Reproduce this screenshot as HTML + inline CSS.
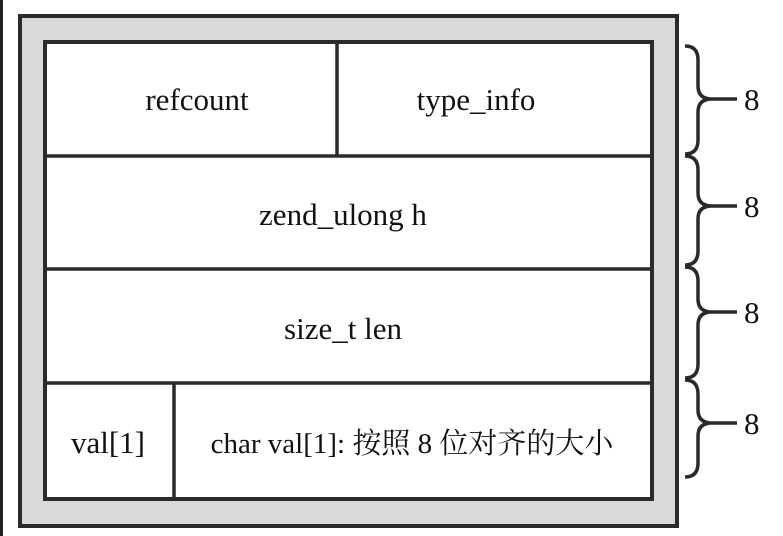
<!DOCTYPE html>
<html><head><meta charset="utf-8"><style>
html,body{margin:0;padding:0;background:#fff;width:783px;height:536px;overflow:hidden}
svg{display:block}
.t{font-family:'Liberation Serif','Noto Serif CJK SC',serif;fill:#111}
</style></head><body>
<svg width="783" height="536" viewBox="0 0 783 536">
<rect x="0" y="0" width="3" height="536" fill="#222"/>
<rect x="20" y="16" width="657" height="510" fill="#d9d9d9" stroke="#2a2a2a" stroke-width="4"/>
<rect x="45" y="42" width="607" height="457" fill="#fff" stroke="#2a2a2a" stroke-width="4"/>
<g stroke="#2a2a2a" stroke-width="3.5">
<line x1="45" y1="156" x2="652" y2="156"/>
<line x1="45" y1="269" x2="652" y2="269"/>
<line x1="45" y1="383" x2="652" y2="383"/>
<line x1="337" y1="42" x2="337" y2="156"/>
<line x1="174" y1="383" x2="174" y2="499"/>
</g>
<g class="t" font-family="Liberation Serif, Noto Serif CJK SC, serif" font-size="31" text-anchor="middle">
<text x="197" y="110">refcount</text>
<text x="476" y="110">type_info</text>
<text x="343" y="225">zend_ulong h</text>
<text x="343" y="339">size_t len</text>
<text x="108" y="453">val[1]</text>
<text x="412" y="453" font-size="29">char val[1]: 按照 8 位对齐的大小</text>
</g>
<g fill="none" stroke="#2a2a2a" stroke-width="3.5">
<path d="M685 46 Q698 46 698 60 L698 86 Q698 99 712 99 L737 99 M712 99 Q698 99 698 112 L698 140 Q698 154 685 154"/>
<path d="M685 156 Q698 156 698 170 L698 193 Q698 206 712 206 L737 206 M712 206 Q698 206 698 219 L698 251 Q698 265 685 265"/>
<path d="M685 267 Q698 267 698 281 L698 299 Q698 312 712 312 L737 312 M712 312 Q698 312 698 325 L698 364 Q698 378 685 378"/>
<path d="M685 380 Q698 380 698 394 L698 410 Q698 423 712 423 L737 423 M712 423 Q698 423 698 436 L698 463 Q698 477 685 477"/>
</g>
<g class="t" font-family="Liberation Serif, serif" font-size="31">
<text x="744" y="110">8</text>
<text x="744" y="217">8</text>
<text x="744" y="323">8</text>
<text x="744" y="434">8</text>
</g>
</svg>
</body></html>
